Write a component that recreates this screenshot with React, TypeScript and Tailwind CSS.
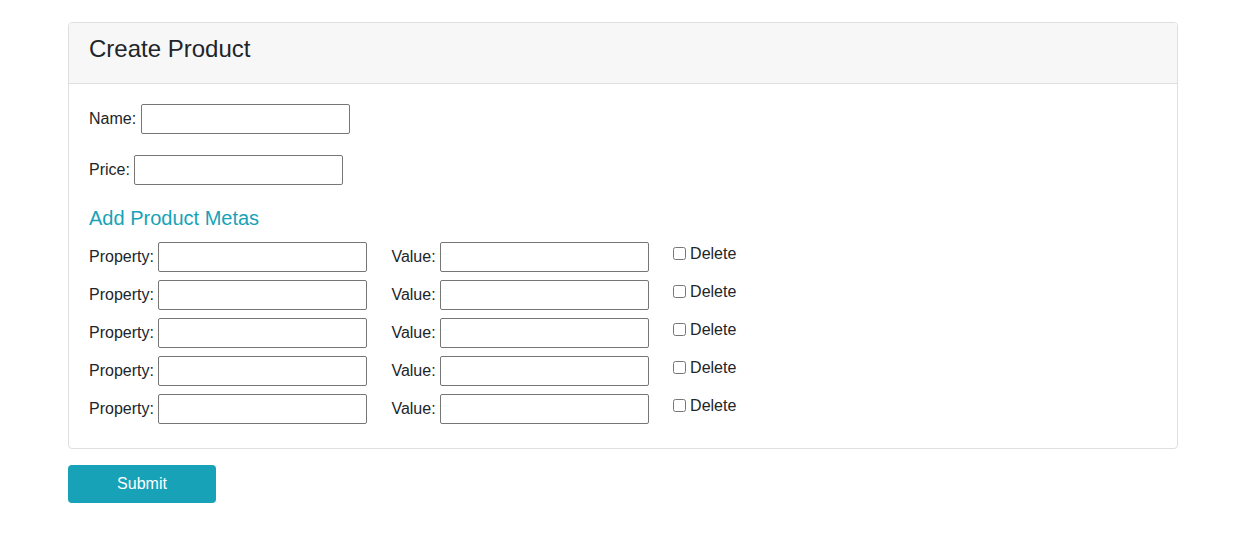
import * as React from 'react';

const metaRows = [0, 1, 2, 3, 4];

function TextInput() {
  return (
    <input
      type="text"
      className="w-[209px] h-[30px] border border-[#767676] rounded-[2px] bg-white px-[2px] text-[16px] outline-none"
    />
  );
}

export default function App() {
  return (
    <div
      className="min-h-screen bg-white text-[#212529] text-[16px]"
      style={{ fontFamily: '"Liberation Sans", Arial, sans-serif' }}
    >
      <div className="w-[1110px] ml-[68px] pt-[22px]">
        {/* Card */}
        <div className="border border-[#dfdfdf] rounded-[4px] bg-white">
          <div className="bg-[#f7f7f7] border-b border-[#dfdfdf] rounded-t-[3px] px-[20px] pt-[12px] pb-[19px]">
            <h3 className="text-[24px] leading-[28.8px] font-normal">Create Product</h3>
          </div>

          <div className="px-[20px] pt-[20px] pb-[24px]">
            <div className="flex items-center gap-[4.5px] h-[30px] mb-[21px]">
              <label>Name:</label>
              <TextInput />
            </div>
            <div className="flex items-center gap-[4.5px] h-[30px] mb-[21px]">
              <label>Price:</label>
              <TextInput />
            </div>

            <h5 className="text-[20px] leading-[24px] text-[#17a2b8] mb-[12px]">Add Product Metas</h5>

            <div className="flex flex-col gap-[8px]">
              {metaRows.map((i) => (
                <div key={i} className="flex items-start h-[30px]">
                  <div className="flex items-center gap-[4.5px]">
                    <label>Property:</label>
                    <TextInput />
                  </div>
                  <div className="flex items-center gap-[4.5px] ml-[24px]">
                    <label>Value:</label>
                    <TextInput />
                  </div>
                  <label className="flex items-start gap-[4px] ml-[24px] leading-[24px]">
                    <input type="checkbox" className="w-[13px] h-[13px] mt-[5px]" />
                    <span>Delete</span>
                  </label>
                </div>
              ))}
            </div>
          </div>
        </div>

        <button className="mt-[16px] w-[148px] h-[38px] rounded-[4px] bg-[#17a2b8] text-white text-[16px]">
          Submit
        </button>
      </div>
    </div>
  );
}
